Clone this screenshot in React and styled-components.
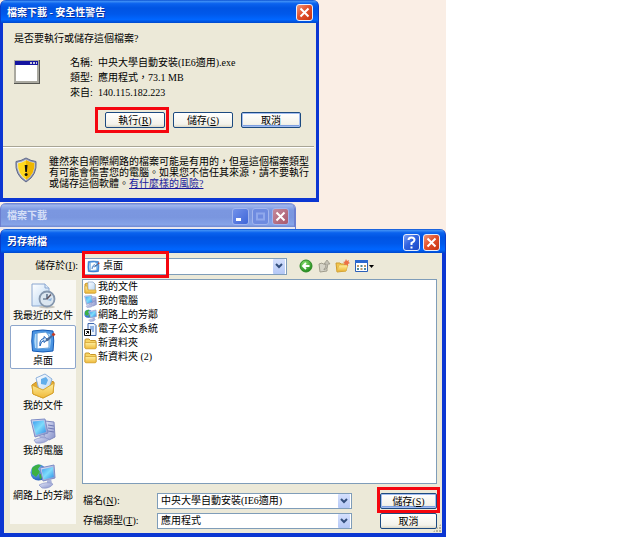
import React, { useState } from "react";
import styled, { createGlobalStyle, css } from "styled-components";

const GlobalStyle = createGlobalStyle`
  *, *::after {
    box-sizing: border-box;
  }
  body {
    margin: 0;
    background: #fff;
    color: #000;
    font: 10px/14px "Liberation Serif", "Noto Sans CJK TC", serif;
  }
  button, input, select {
    font: inherit;
    color: inherit;
    margin: 0;
  }
`;

const activeBar = `linear-gradient(#0a4fd0 0, #3b8cf5 6%, #0a62ee 16%, #0054e3 35%, #0058ea 60%, #0066ff 85%, #0048cc 100%)`;
const idleBar = `linear-gradient(#6a80d0 0, #9db5ee 10%, #7b97e0 30%, #7a96df 60%, #86a4e8 90%, #7088d0 100%)`;

const Desktop = styled.main`
  width: calc(100% - 178px);
  min-width: 446px;
  background: #faeee5;
`;

const Window = styled.section`
  margin-right: ${(p) => p.$inset || 0}px;
`;

const TitleBar = styled.header`
  display: flex;
  align-items: center;
  gap: 3px;
  height: ${(p) => (p.$tall ? 24 : 23)}px;
  padding: 2px 5px 0 6px;
  border-radius: 6px 6px 0 0;
  background: ${(p) => (p.$idle ? idleBar : activeBar)};
  border: solid ${(p) => (p.$idle ? "#6b7fd0" : "#0a3cc8")};
  border-width: 0 1px;
  color: ${(p) => (p.$idle ? "#d5dff7" : "#fff")};
`;

const Title = styled.h1`
  flex: 1;
  margin: 0;
  font-size: 10px;
  font-weight: 700;
  text-shadow: ${(p) => (p.$idle ? "none" : "1px 1px #0a2f9a")};
`;

const captionColors = {
  close: "linear-gradient(135deg, #f0967a, #e2512c 45%, #c8330f)",
  help: "linear-gradient(135deg, #7da0f5, #2f62e0 45%, #1d48c4)",
  idle: "linear-gradient(135deg, #7291ea, #3f66d8)",
  off: "#6e8be0",
  closeIdle: "linear-gradient(135deg, #c58a9c, #a8586c)",
};

const CaptionButton = styled.button`
  display: flex;
  align-items: center;
  justify-content: center;
  width: 17px;
  height: 17px;
  padding: 0;
  border: 1px solid ${(p) => (p.$dim ? "#a3b6ee" : "#e8eefc")};
  border-radius: 3px;
  background: ${(p) => captionColors[p.$kind]};
`;

const Body = styled.div`
  border: solid #0b36d2;
  border-width: 0 ${(p) => p.$edge}px 4px;
  background: #ece9d8;
`;

const Question = styled.p`
  margin: 0;
  padding: 9px 11px 0;
`;

const FileInfo = styled.div`
  display: flex;
  gap: 30px;
  padding: 9px 11px 0;
`;

const ExeIcon = styled.svg`
  margin-top: 5px;
`;

const Details = styled.dl`
  display: grid;
  grid-template-columns: 28px 1fr;
  margin: 0;
  line-height: 15px;
  dd {
    margin: 0;
  }
`;

const ButtonRow = styled.div`
  display: flex;
  justify-content: flex-end;
  gap: 8px;
  padding: 12px 15px 18px;
`;

const PushButton = styled.button`
  width: ${(p) => p.$width || 60}px;
  height: 16px;
  padding: 0;
  border: 1px solid #1c4a80;
  border-radius: 2px;
  background: linear-gradient(#fff, #f3f2ea 80%, #dcd8c8);
  line-height: 13px;
  ${(p) =>
    p.$focused &&
    css`
      box-shadow: inset 0 0 0 1px #a3bdf0, inset 0 -2px #7d9fe0;
    `}
`;

/* red frame drawn over whatever it wraps */
const Marked = styled.div`
  position: relative;
  display: flex;
  flex: ${(p) => (p.$grow ? 1 : "none")};
  min-width: 0;
  &::after {
    content: "";
    position: absolute;
    inset: ${(p) => p.$inset};
    width: ${(p) => (p.$markWidth ? `${p.$markWidth}px` : "auto")};
    border: 3px solid #f5060f;
    pointer-events: none;
  }
`;

const Warning = styled.div`
  display: flex;
  gap: 12px;
  margin-right: 2px;
  padding: 9px 0 9px 12px;
  border-top: 1px solid #a8a595;
  box-shadow: inset 0 1px #fff;
  line-height: 11px;
  p {
    margin: 0;
    white-space: nowrap;
  }
  a {
    color: #1a1a9c;
  }
`;

const IdleWindow = styled(Window)`
  margin-top: 1px;
  padding-bottom: 2px;
  border-right: 1px solid #6b7fd0;
  border-radius: 6px 6px 0 0;
  background: #e8e8f0;
`;

const LookIn = styled.div`
  display: flex;
  align-items: center;
  height: 26px;
  padding-left: 6px;
  > label {
    width: 68px;
    margin-right: 6px;
    text-align: right;
  }
`;

const Combo = styled.div`
  display: flex;
  align-items: center;
  flex: 1;
  min-width: 0;
  height: ${(p) => (p.$tall ? 17 : 16)}px;
  padding: 0 1px 0 2px;
  border: 1px solid #7f9db9;
  background: #fff;
  input, select {
    flex: 1;
    min-width: 0;
    height: 14px;
    padding: 0 1px;
    border: 0;
    outline: 0;
    background: none;
    appearance: none;
  }
  > svg {
    flex: none;
    margin-right: 2px;
  }
`;

const Arrow = styled.span`
  display: flex;
  align-items: center;
  justify-content: center;
  width: 12px;
  height: 100%;
  border-radius: 1px;
  background: linear-gradient(#d5e0fd, #b4c8f6);
`;

const Tools = styled.div`
  display: flex;
  align-items: center;
  gap: 4px;
  width: 155px;
  padding-left: 12px;
`;

const ToolButton = styled.button`
  display: flex;
  align-items: center;
  padding: 0;
  border: 0;
  background: none;
`;

const Columns = styled.div`
  display: grid;
  grid-template-columns: 66px 1fr;
  gap: 6px;
  padding: 0 5px 4px 6px;
`;

const Places = styled.nav`
  display: flex;
  flex-direction: column;
  gap: 1px;
  margin: 1px 0 5px;
  background: #f9f8f3;
`;

const Place = styled.a`
  display: flex;
  flex-direction: column;
  align-items: center;
  height: 44px;
  padding-top: 2px;
  border: 1px solid ${(p) => (p.$current ? "#8da6cc" : "transparent")};
  border-radius: 2px;
  background: ${(p) => (p.$current ? "#fff" : "none")};
  color: #000;
  text-decoration: none;
  white-space: nowrap;
`;

const FileList = styled.ul`
  height: 205px;
  margin: 0 0 9px;
  padding: 0 0 0 1px;
  border: 1px solid #7f9db9;
  background: #fff;
  list-style: none;
`;

const FileItem = styled.li`
  display: flex;
  align-items: center;
  gap: 1px;
  height: 14px;
`;

const SaveForm = styled.form`
  display: grid;
  grid-template-columns: 74px 1fr 57px;
  row-gap: 4px;
  align-items: center;
  padding-left: 1px;
  ${Combo} {
    margin-right: 28px;
  }
`;

const Grip = styled.div`
  position: absolute;
  right: 5px;
  bottom: 5px;
  width: 8px;
  height: 8px;
  background: radial-gradient(circle at 1px 1px, #b5b19c 1px, transparent 1px) 0 0 / 3px 3px;
  clip-path: polygon(100% 0, 100% 100%, 0 100%);
`;

const SaveWindow = styled(Window)`
  position: relative;
`;

const Cross = () => (
  <svg width="11" height="11" viewBox="0 0 11 11" stroke="#fff" strokeWidth="2">
    <path d="M1.5 1.5 9.5 9.5M9.5 1.5 1.5 9.5" />
  </svg>
);

const DropArrow = () => (
  <Arrow>
    <svg width="8" height="6" viewBox="0 0 8 6" fill="none" stroke="#35507e" strokeWidth="2">
      <path d="M1 1l3 3 3-3" />
    </svg>
  </Arrow>
);

const HiddenSvg = styled.svg`
  display: block;
`;

const Gradients = () => (
  <HiddenSvg width="0" height="0" aria-hidden="true">
    <defs>
      <linearGradient id="screen" x1="0" y1="0" x2="1" y2="1">
        <stop offset="0" stopColor="#3f9df0" />
        <stop offset=".5" stopColor="#7fdcfb" />
        <stop offset="1" stopColor="#2d8be6" />
      </linearGradient>
      <linearGradient id="case" x1="0" y1="0" x2="1" y2="1">
        <stop offset="0" stopColor="#e4e8fa" />
        <stop offset="1" stopColor="#8590c8" />
      </linearGradient>
      <linearGradient id="folder" x1="0" y1="0" x2="0" y2="1">
        <stop offset="0" stopColor="#fff0a0" />
        <stop offset="1" stopColor="#efb93a" />
      </linearGradient>
      <linearGradient id="paper" x1="0" y1="0" x2="1" y2="1">
        <stop offset="0" stopColor="#fff" />
        <stop offset="1" stopColor="#b9d6f3" />
      </linearGradient>
      <radialGradient id="globe" cx=".35" cy=".3" r=".8">
        <stop offset="0" stopColor="#8fd0ff" />
        <stop offset="1" stopColor="#1450b8" />
      </radialGradient>
      <radialGradient id="green" cx=".4" cy=".3" r=".7">
        <stop offset="0" stopColor="#8be070" />
        <stop offset="1" stopColor="#1f8a1c" />
      </radialGradient>
    </defs>
  </HiddenSvg>
);

const RecentIcon = ({ size = 26 }) => (
  <svg width={size} height={size} viewBox="0 0 26 26">
    <path d="M2 1h13l4 4v18H2z" fill="url(#paper)" stroke="#8aa6cf" />
    <path d="M15 1v4h4" fill="#dceaf9" stroke="#8aa6cf" />
    <ellipse cx="17" cy="24" rx="8" ry="1.5" fill="#c9c7bf" />
    <circle cx="17" cy="16" r="7.5" fill="#dbe6f0" stroke="#8496ad" strokeWidth="1.8" />
    <path d="M17 16V11M16 16h-3" stroke="#39506f" strokeWidth="1.2" />
    <path d="M16.500 16.500 21 11.500" stroke="#5f5560" strokeWidth="1.5" />
    <path d="M17 17l5-2-1 3z" fill="#8fb4dc" />
  </svg>
);

const DesktopIcon = ({ size = 26 }) => (
  <svg width={size} height={size} viewBox="0 0 26 26">
    <path d="M2.500 3q10-2 20.500 0 1.500 10 0 20-10 2-20.500 0-1.500-10 0-20z" fill="#4a94e2" stroke="#155ab4" />
    <path d="M5 6q8-2 15 0 1.500 7 0 14-8 2-15 0-1.500-7 0-14z" fill="#b5dcf8" />
    <path d="M7 5l9-1 3 4v12l-12 1z" fill="#fff" stroke="#5b9ad8" />
    <path d="M10 18q-1-7 4-7.500V8.500l3.500 3-3.500 3v-2q-3 .5-4 5.500z" fill="#d5e8fa" stroke="#2063b8" />
    <path d="M16 11l6-4 1 1-5 5-2.500.5z" fill="#4a6a98" />
    <path d="M21.500 6.500l2-2 2 2-2 2z" fill="#c33b26" />
  </svg>
);

const DocsIcon = ({ size = 26 }) => (
  <svg width={size} height={size} viewBox="0 0 26 26">
    <path d="M2 12 12 5l12 4-1 11-10 5-10-4z" fill="#e5a92e" stroke="#c48d20" />
    <path d="M6 5l9-4 7 5-4 13-9-2z" fill="url(#paper)" stroke="#8fb2dc" />
    <path d="M11 6l5-2 2 3-2 5-5-1z" fill="#62aeea" />
    <path d="M2 12l11 5 11-7-1 10-10 5-10-4z" fill="url(#folder)" stroke="#d9a52e" />
  </svg>
);

const ComputerIcon = ({ size = 26 }) => (
  <svg width={size} height={size} viewBox="0 0 26 26">
    <path d="M15 3l9 1 1 15-6 3-5-3z" fill="url(#case)" stroke="#8089be" />
    <path d="M18 7l6 1M18 10l6 1M18 13l6 1" stroke="#6f79b5" />
    <path d="M1 2l14-1 3 14-13 4z" fill="url(#case)" stroke="#7d8cc6" />
    <path d="M2.500 3.500l11.500-1 2 11.500-10 3z" fill="url(#screen)" />
    <path d="M9 18l5-1 1 3h-5z" fill="#a9b2da" />
    <path d="M4 22q7-4 15-1-4 5-13 4z" fill="url(#case)" stroke="#8a94c8" strokeWidth=".7" />
  </svg>
);

const NetworkIcon = ({ size = 26 }) => (
  <svg width={size} height={size} viewBox="0 0 26 26">
    <circle cx="8.500" cy="9.500" r="8" fill="url(#globe)" />
    <path d="M2 5q5-5 9-3l-3 4 2 3-4 5-4-3zM9 10l4 3-3 4z" fill="#3cb043" />
    <path d="M10 5l14-3 1 13-12 3z" fill="url(#case)" stroke="#7d8cc6" />
    <path d="M11.500 6.500l11.500-2.500.8 10-10 2.500z" fill="url(#screen)" />
    <path d="M17 17l4-1 1 4h-5z" fill="#a9b2da" />
    <path d="M9 22q7-4 14-1-3 5-11 4z" fill="url(#case)" stroke="#8a94c8" strokeWidth=".7" />
  </svg>
);

const FolderIcon = ({ size = 13 }) => (
  <svg width={size} height={size} viewBox="0 0 13 13">
    <path d="M1 3q0-1 1-1h3l1.500 1.500H11q1 0 1 1V11H1z" fill="#f7d566" stroke="#c99727" />
    <path d="M1 5.500h11V11q0 .8-1 .8H2q-1 0-1-1z" fill="url(#folder)" stroke="#d6a534" strokeWidth=".8" />
  </svg>
);

const MyDocsIcon = () => (
  <svg width="13" height="13" viewBox="0 0 13 13">
    <path d="M1 3l2-1 2 1h6v9H1z" fill="#f0c14b" stroke="#c99727" />
    <path d="M4 1h5l2 2v7H4z" fill="url(#paper)" stroke="#88a5cc" strokeWidth=".7" />
    <path d="M1 5h2l1 4h8v3H1z" fill="url(#folder)" stroke="#d6a534" strokeWidth=".7" />
  </svg>
);

const ShortcutIcon = () => (
  <svg width="13" height="13" viewBox="0 0 13 13">
    <path d="M4 .500h6l2 2v10H4z" fill="#eaf2fc" stroke="#3f66ad" />
    <path d="M6 4h4M6 6h4M8 8h2" stroke="#3b74ce" />
    <path d="M.5 6.500h6v6h-6z" fill="#fff" stroke="#111" />
    <path d="M2 11l2.500-2.500M2.500 8.500h2V10.500" stroke="#000" fill="none" />
  </svg>
);

const ShieldIcon = () => (
  <svg width="22" height="28" viewBox="0 0 22 26">
    <path d="M11 1Q16 4 21 4.500 22.500 18 11 25-.5 18 1 4.500 6 4 11 1z" fill="#8e96b2" stroke="#626b8c" />
    <path d="M11 3Q15 5.500 19.500 6 20 17 11 23 2 17 2.500 6 7 5.500 11 3z" fill="#ffd91f" stroke="#e6eaf4" strokeWidth=".8" />
    <path d="M11 3Q15 5.500 19.500 6 20 17 11 23z" fill="#efb600" />
    <path d="M9.700 8h2.800l-.6 7h-1.600z" fill="#111" />
    <circle cx="11.100" cy="17.500" r="1.500" fill="#111" />
  </svg>
);

const places = [
  { name: "我最近的文件", Icon: RecentIcon },
  { name: "桌面", Icon: DesktopIcon, current: true },
  { name: "我的文件", Icon: DocsIcon },
  { name: "我的電腦", Icon: ComputerIcon },
  { name: "網路上的芳鄰", Icon: NetworkIcon },
];

const files = [
  { name: "我的文件", Icon: MyDocsIcon },
  { name: "我的電腦", Icon: ComputerIcon },
  { name: "網路上的芳鄰", Icon: NetworkIcon },
  { name: "電子公文系統", Icon: ShortcutIcon },
  { name: "新資料夾", Icon: FolderIcon },
  { name: "新資料夾 (2)", Icon: FolderIcon },
];

function SecurityWarning() {
  return (
    <Window $inset={127}>
      <TitleBar>
        <Title>檔案下載 - 安全性警告</Title>
        <CaptionButton $kind="close" aria-label="關閉">
          <Cross />
        </CaptionButton>
      </TitleBar>
      <Body $edge={3}>
        <Question>是否要執行或儲存這個檔案?</Question>
        <FileInfo>
          <ExeIcon width="26" height="24" viewBox="0 0 26 24">
            <path d="M0 0h26v24H0z" fill="#55554f" />
            <path d="M0 0h25v23H0z" fill="#aaa9a0" />
            <path d="M2 5h21v16H2z" fill="#fff" />
            <path d="M1 1h23v4H1z" fill="#1414a0" />
            <path d="M16 2h2v2h-2zM19 2h2v2h-2zM22 2h1v2h-1z" fill="#c8c8d8" />
          </ExeIcon>
          <Details>
            <dt>名稱:</dt>
            <dd>中央大學自動安裝(IE6適用).exe</dd>
            <dt>類型:</dt>
            <dd>應用程式，73.1 MB</dd>
            <dt>來自:</dt>
            <dd>140.115.182.223</dd>
          </Details>
        </FileInfo>
        <ButtonRow>
          <Marked $inset="-5px -4px -5px -10px">
            <PushButton>
              執行(<u>R</u>)
            </PushButton>
          </Marked>
          <PushButton>
            儲存(<u>S</u>)
          </PushButton>
          <PushButton $focused>取消</PushButton>
        </ButtonRow>
        <Warning>
          <ShieldIcon />
          <p>
            雖然來自網際網路的檔案可能是有用的，但是這個檔案類型
            <br />
            有可能會傷害您的電腦。如果您不信任其來源，請不要執行
            <br />
            或儲存這個軟體。<a href="#risk">有什麼樣的風險?</a>
          </p>
        </Warning>
      </Body>
    </Window>
  );
}

function SaveAs() {
  const [fileName, setFileName] = useState("中央大學自動安裝(IE6適用)");

  return (
    <SaveWindow>
      <TitleBar $tall>
        <Title>另存新檔</Title>
        <CaptionButton $kind="help" aria-label="說明">
          <svg width="11" height="13" viewBox="0 0 11 13" fill="none" stroke="#fff" strokeWidth="2">
            <path d="M2.500 4Q2.500 1.500 5.500 1.500T8.500 4Q8.500 5.500 5.500 7v2M5.500 10.500v2" />
          </svg>
        </CaptionButton>
        <CaptionButton $kind="close" aria-label="關閉">
          <Cross />
        </CaptionButton>
      </TitleBar>
      <Body $edge={4}>
        <LookIn>
          <label htmlFor="look-in">
            儲存於(<u>I</u>):
          </label>
          <Marked $grow $inset="-7px auto -3px -2px" $markWidth={87}>
            <Combo $tall>
              <DesktopIcon size={13} />
              <select id="look-in">
                <option>桌面</option>
              </select>
              <DropArrow />
            </Combo>
          </Marked>
          <Tools>
            <ToolButton aria-label="上一頁">
              <svg width="14" height="14" viewBox="0 0 14 14">
                <circle cx="7" cy="7" r="6" fill="url(#green)" stroke="#2c8a26" />
                <path d="M10.500 7H4.500M7 4 4 7l3 3" stroke="#fff" strokeWidth="1.8" fill="none" />
              </svg>
            </ToolButton>
            <ToolButton aria-label="上一層">
              <svg width="14" height="14" viewBox="0 0 14 14">
                <path d="M2 5l3-1 1 1h4v7l-7 1z" fill="#d6d4c8" stroke="#a19e8e" />
                <path d="M7 10q2-1 2-5H7l3-4 3 4h-2q0 5-4 6z" fill="#c4c2b6" stroke="#939084" strokeWidth=".7" />
              </svg>
            </ToolButton>
            <ToolButton aria-label="新資料夾">
              <svg width="15" height="14" viewBox="0 0 15 14">
                <path d="M1 4h4l1 1h5v7l-9 1z" fill="#f2c64c" stroke="#cf9c2f" />
                <path d="M2 12l2-6h9l-2 6z" fill="url(#folder)" stroke="#e0b548" strokeWidth=".7" />
                <path d="M11 0l1 2 2-1-.5 2 1.500 1-2 1 0 2-2-1.500L9 6l.5-2L8 3l2-.5z" fill="#ed7045" />
              </svg>
            </ToolButton>
            <ToolButton aria-label="檢視">
              <svg width="21" height="14" viewBox="0 0 21 14">
                <path d="M1.500 1.500h12v11h-12z" fill="#fff" stroke="#2a5fb8" />
                <path d="M1 1h13v3H1z" fill="#2a68d0" />
                <path d="M3 6h2v2H3zM10 6h2v2h-2zM6.500 9h2v2h-2z" fill="#b99a6a" />
                <path d="M6.500 6h2v2h-2zM3 9h2v2H3zM10 9h2v2h-2z" fill="#4a8a9e" />
                <path d="M15 6h5l-2.500 3z" fill="#000" />
              </svg>
            </ToolButton>
          </Tools>
        </LookIn>
        <Columns>
          <Places>
            {places.map(({ name, Icon, current }) => (
              <Place key={name} href="#" $current={current}>
                <Icon />
                {name}
              </Place>
            ))}
          </Places>
          <div>
            <FileList>
              {files.map(({ name, Icon }) => (
                <FileItem key={name}>
                  <Icon size={13} />
                  {name}
                </FileItem>
              ))}
            </FileList>
            <SaveForm onSubmit={(e) => e.preventDefault()}>
              <label htmlFor="file-name">
                檔名(<u>N</u>):
              </label>
              <Combo>
                <input
                  id="file-name"
                  autoFocus
                  value={fileName}
                  onChange={(e) => setFileName(e.target.value)}
                />
                <DropArrow />
              </Combo>
              <Marked $inset="-6px -3px -4px -3px">
                <PushButton $width={57} $focused>
                  儲存(<u>S</u>)
                </PushButton>
              </Marked>
              <label htmlFor="file-type">
                存檔類型(<u>T</u>):
              </label>
              <Combo>
                <select id="file-type">
                  <option>應用程式</option>
                </select>
                <DropArrow />
              </Combo>
              <PushButton type="button" $width={57}>
                取消
              </PushButton>
            </SaveForm>
          </div>
        </Columns>
      </Body>
      <Grip />
    </SaveWindow>
  );
}

function App() {
  return (
    <>
      <GlobalStyle />
      <Gradients />
      <Desktop>
        <SecurityWarning />
        <IdleWindow $inset={150}>
          <TitleBar $idle $tall>
            <Title $idle>檔案下載</Title>
            <CaptionButton $kind="idle" $dim aria-label="最小化">
              <svg width="11" height="11" viewBox="0 0 11 11">
                <path d="M1 7h5v3H1z" fill="#fff" />
              </svg>
            </CaptionButton>
            <CaptionButton $kind="off" $dim disabled aria-label="最大化">
              <svg width="11" height="11" viewBox="0 0 11 11">
                <path d="M2 2.500h7v6H2z" fill="none" stroke="#8fa8ec" strokeWidth="2" />
              </svg>
            </CaptionButton>
            <CaptionButton $kind="closeIdle" $dim aria-label="關閉">
              <Cross />
            </CaptionButton>
          </TitleBar>
        </IdleWindow>
        <SaveAs />
      </Desktop>
    </>
  );
}

export default App;
